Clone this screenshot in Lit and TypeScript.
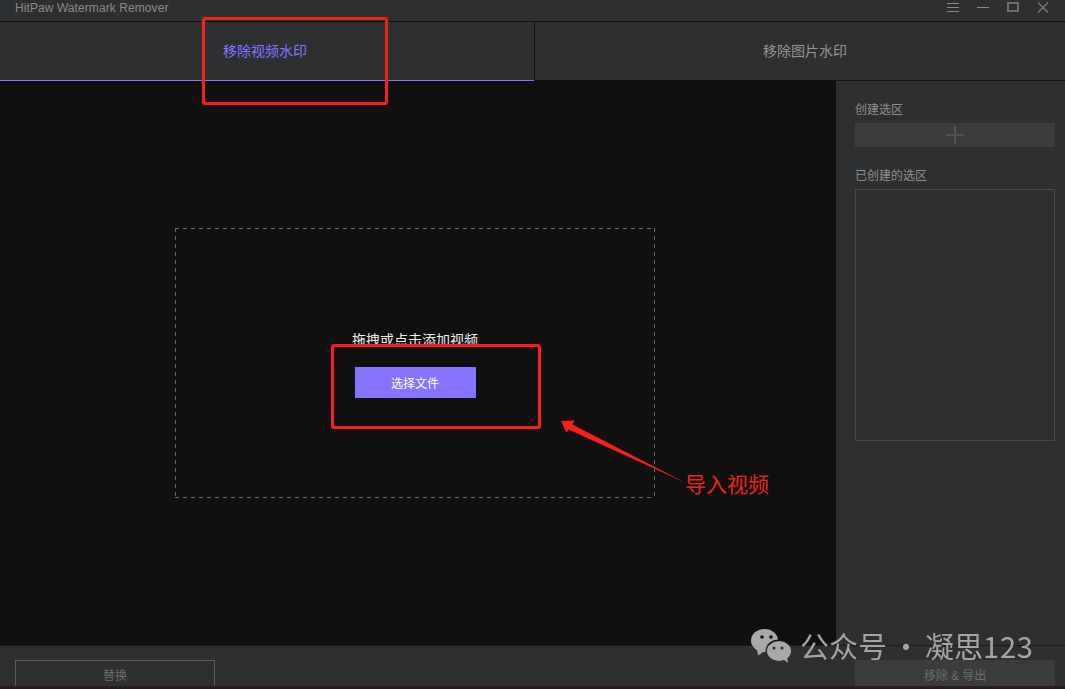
import { LitElement, html, css, svg } from "lit";
import { customElement } from "lit/decorators.js";

@customElement("app-root")
export class AppRoot extends LitElement {
  static styles = css`
    :host {
      display: block;
      position: relative;
      width: 1065px;
      height: 689px;
      overflow: hidden;
      background: #2e2f31;
      font-family: "Liberation Sans", "Noto Sans CJK SC", sans-serif;
      color: #9a9a9a;
    }
    .app { display: flex; flex-direction: column; height: 689px; }
    .title {
      height: 22px; flex: none; display: flex; align-items: flex-start; justify-content: space-between;
      padding-left: 15px; font-size: 12px; line-height: 16px; letter-spacing: 0.08px; color: #8a8a8a;
      border-bottom: 1px solid #111; box-sizing: border-box;
    }
    .win { display: flex; align-items: flex-start; gap: 17px; padding: 2px 16px 0 0; }
    .win svg { display: block; }
    .tabs { display: flex; height: 59px; flex: none; font-size: 14px; }
    .tab {
      display: flex; align-items: center; justify-content: center; box-sizing: border-box;
      border-bottom: 1px solid #111; color: #949494; padding-bottom: 3px;
    }
    .tab.on { width: 534px; color: #8474ff; border-bottom-color: #8474ff; justify-content: flex-start; padding-left: 223px; }
    .tab.off { flex: 1; border-left: 1px solid #111; padding-left: 10px; }
    .main { display: flex; flex: 1; min-height: 0; }
    .stage { flex: 1; background: #101011; display: flex; padding: 147px 0 0 175px; box-sizing: border-box; }
    .drop {
      width: 480px; height: 270px; box-sizing: border-box;
      display: flex; flex-direction: column; align-items: center; padding-top: 102px;
      background-image:
        repeating-linear-gradient(to right, #6a6a6a 0 4px, transparent 4px 8px),
        repeating-linear-gradient(to right, #6a6a6a 0 4px, transparent 4px 8px),
        repeating-linear-gradient(to bottom, #6a6a6a 0 4px, transparent 4px 8px),
        repeating-linear-gradient(to bottom, #6a6a6a 0 4px, transparent 4px 8px);
      background-size: 100% 1px, 100% 1px, 1px 100%, 1px 100%;
      background-position: 0 0, 0 100%, 0 0, 100% 0;
      background-repeat: no-repeat;
    }
    .drop p { margin: 0 0 17px; font-size: 14px; line-height: 20px; color: #eee; }
    .pick {
      width: 121px; height: 31px; background: #8474ff; color: #fff; font-size: 12px;
      display: flex; align-items: center; justify-content: center; padding-bottom: 1px; box-sizing: border-box;
    }
    .side { width: 229px; flex: none; box-sizing: border-box; padding: 21px 10px 0 19px; font-size: 12px; color: #8f8f8f; }
    .side h4 { margin: 0; font-weight: 400; font-size: 12px; line-height: 17px; }
    .add { height: 24px; margin-top: 4px; background: #3b3c3e; display: flex; align-items: center; justify-content: center; }
    .add svg { display: block; }
    .side h4.two { margin-top: 21px; }
    .list { height: 252px; margin-top: 4px; border: 1px solid #4a4b4d; box-sizing: border-box; }
    .foot {
      height: 41px; flex: none; box-sizing: border-box; border-top: 1px solid #1a1a1b; display: flex;
      justify-content: space-between; padding: 14px 10px 0 15px; font-size: 12px; overflow: hidden;
    }
    .btn { width: 200px; height: 30px; box-sizing: border-box; display: flex; justify-content: center; padding-top: 8px; line-height: 16px; color: #6c6c6c; }
    .btn.line { border: 1px solid #5c5d5f; padding-top: 7px; }
    .btn.fill { background: #3b3c3e; color: #6c6c6c; }
    .strip { height: 3px; flex: none; background: #2a1c1e; }
    .mark { position: absolute; border: 3px solid #f5201a; border-radius: 3px; box-sizing: border-box; box-shadow: 0 0 1px #c81a15; }
    .m1 { left: 202px; top: 17px; width: 186px; height: 88px; }
    .m2 { left: 331px; top: 344px; width: 210px; height: 85px; }
    .arrow { position: absolute; left: 0; top: 0; pointer-events: none; }
    .note { position: absolute; left: 685px; top: 469px; font-size: 21px; line-height: 28px; color: #e8241e; font-family: "Noto Sans CJK SC", sans-serif; }
    .wm {
      position: absolute; left: 750px; top: 627px; display: flex; align-items: flex-start; gap: 8px;
      color: #a4a4a4; font-size: 29px; line-height: 36px; word-spacing: -2px;
      font-family: "Noto Sans CJK SC", sans-serif; white-space: nowrap;
    }
    .wm svg { display: block; margin-top: 1px; }
    .wm span { filter: blur(0.3px); }
    .wm b { font-weight: 400; letter-spacing: 0.8px; }
  `;

  render() {
    return html`
      <div class="app">
        <div class="title">
          <span>HitPaw Watermark Remover</span>
          <div class="win">
            <svg width="13" height="12" viewBox="0 0 13 12" fill="none" stroke="#8a8a8a"><path d="M0 1.500h12M0 5.500h12M0 9.500h12"/></svg>
            <svg width="13" height="12" viewBox="0 0 13 12" fill="none" stroke="#8a8a8a"><path d="M0 5.500h12"/></svg>
            <svg width="13" height="12" viewBox="0 0 13 12" fill="none" stroke="#6e6e6e" stroke-width="2"><rect x="1" y="1" width="10" height="8"/></svg>
            <svg width="12" height="12" viewBox="0 0 12 12" fill="none" stroke="#7d7d7d" stroke-width="1.200"><path d="M1 0.500l10 10M11 0.500L1 10.500"/></svg>
          </div>
        </div>
        <div class="tabs">
          <div class="tab on">移除视频水印</div>
          <div class="tab off">移除图片水印</div>
        </div>
        <div class="main">
          <div class="stage">
            <div class="drop">
              <p>拖拽或点击添加视频</p>
              <div class="pick">选择文件</div>
            </div>
          </div>
          <div class="side">
            <h4>创建选区</h4>
            <div class="add">
              <svg width="18" height="18" viewBox="0 0 18 18" stroke="#525355" stroke-width="2"><path d="M0 9h18M9 0v18"/></svg>
            </div>
            <h4 class="two">已创建的选区</h4>
            <div class="list"></div>
          </div>
        </div>
        <div class="foot">
          <div class="btn line">替换</div>
          <div class="btn fill">移除 & 导出</div>
        </div>
        <div class="strip"></div>
      </div>
      <div class="mark m1"></div>
      <div class="mark m2"></div>
      <svg class="arrow" width="1065" height="689" viewBox="0 0 1065 689">
        ${svg`<path d="M561 421 L574.500 420.500 L572.500 424.500 L686 483 L568.500 429.500 L566.500 432.500 Z" fill="#f5201a"/>`}
      </svg>
      <div class="note">导入视频</div>
      <div class="wm">
        <svg width="42" height="36" viewBox="0 0 42 36">
          <defs>
            <mask id="a"><rect width="42" height="36" fill="#fff"/><ellipse cx="29" cy="23" rx="13.500" ry="11.500" fill="#000"/><circle cx="12" cy="9" r="1.800" fill="#000"/><circle cx="21" cy="9" r="1.800" fill="#000"/></mask>
            <mask id="b"><rect width="42" height="36" fill="#fff"/><circle cx="24" cy="20" r="1.500" fill="#000"/><circle cx="32" cy="20" r="1.500" fill="#000"/></mask>
          </defs>
          <g mask="url(#a)" fill="#a8a8a8">
            <ellipse cx="14.500" cy="12.500" rx="13.500" ry="11.500"/>
            <path d="M7 21 L8 27.500 L14 23.500 Z"/>
          </g>
          <g mask="url(#b)" fill="#a8a8a8">
            <ellipse cx="29" cy="23" rx="12" ry="10"/>
            <path d="M33 31 L38 35 L37 29 Z"/>
          </g>
        </svg>
        <span>公众号 · 凝思<b>123</b></span>
      </div>
    `;
  }
}
